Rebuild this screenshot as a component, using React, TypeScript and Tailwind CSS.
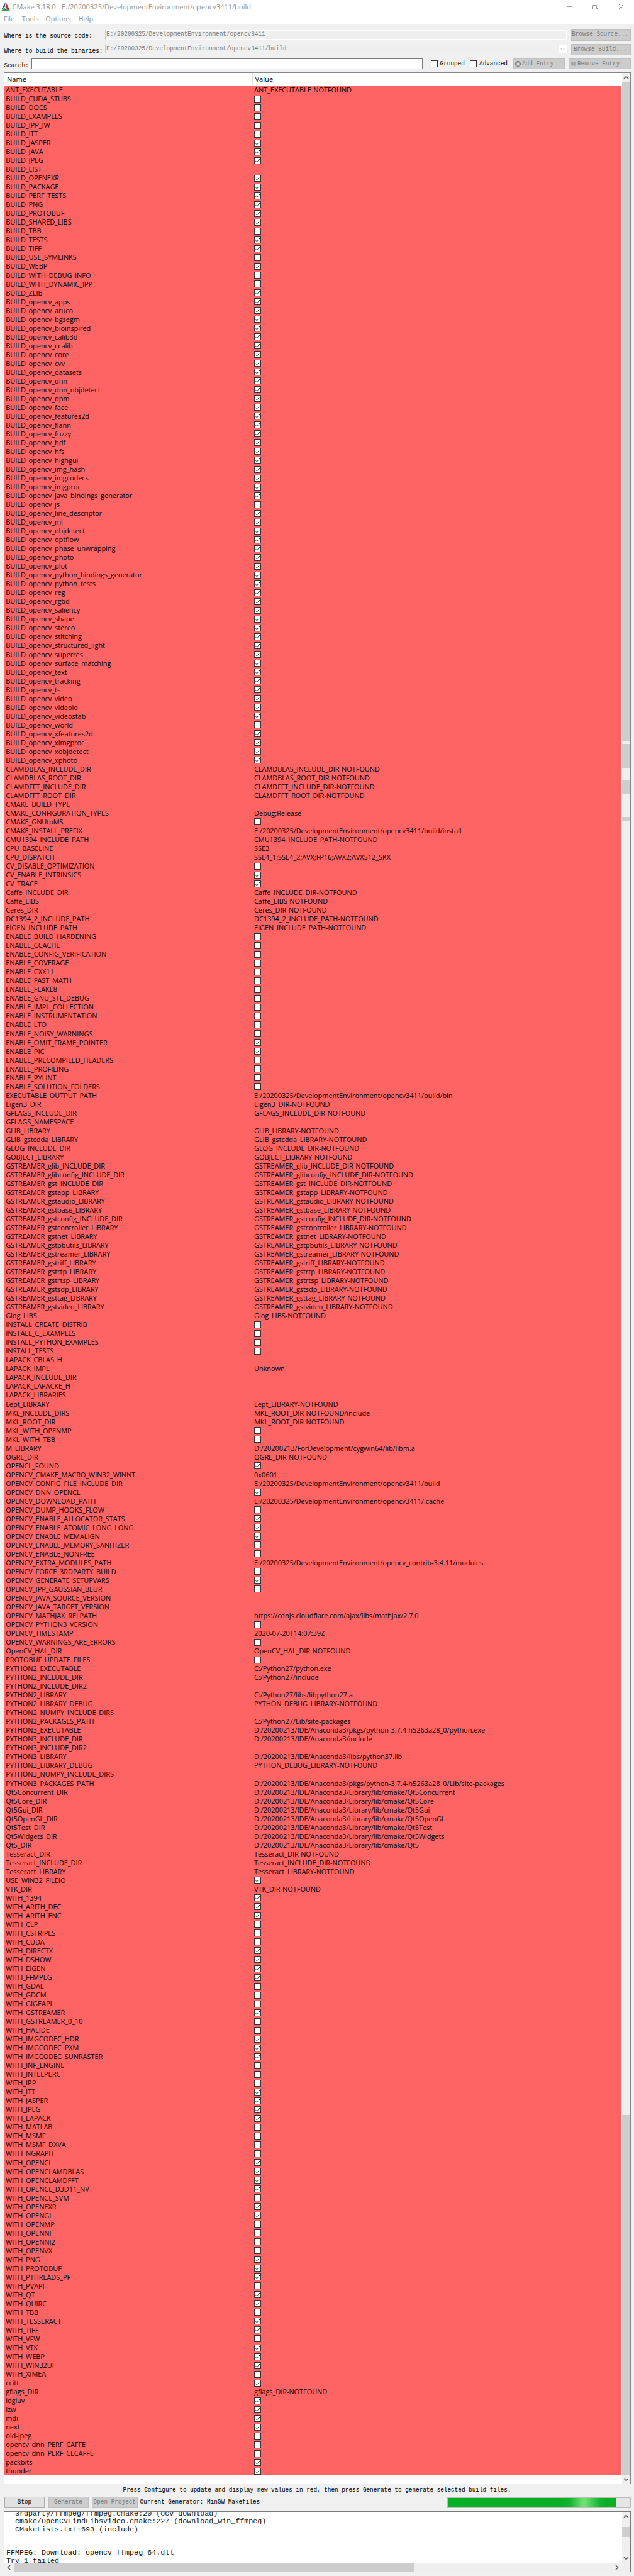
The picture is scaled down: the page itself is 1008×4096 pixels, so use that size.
import React from "react";

type Cell = boolean | string;

const SOURCE = `
ANT_EXECUTABLE=*
BUILD_CUDA_STUBS=off
BUILD_DOCS=off
BUILD_EXAMPLES=off
BUILD_IPP_IW=off
BUILD_ITT=off
BUILD_JASPER=on
BUILD_JAVA=on
BUILD_JPEG=on
BUILD_LIST=
BUILD_OPENEXR=on
BUILD_PACKAGE=on
BUILD_PERF_TESTS=on
BUILD_PNG=on
BUILD_PROTOBUF=on
BUILD_SHARED_LIBS=on
BUILD_TBB=off
BUILD_TESTS=on
BUILD_TIFF=on
BUILD_USE_SYMLINKS=off
BUILD_WEBP=on
BUILD_WITH_DEBUG_INFO=off
BUILD_WITH_DYNAMIC_IPP=off
BUILD_ZLIB=on
BUILD_opencv_apps=on
BUILD_opencv_aruco=on
BUILD_opencv_bgsegm=on
BUILD_opencv_bioinspired=on
BUILD_opencv_calib3d=on
BUILD_opencv_ccalib=on
BUILD_opencv_core=on
BUILD_opencv_cvv=on
BUILD_opencv_datasets=on
BUILD_opencv_dnn=on
BUILD_opencv_dnn_objdetect=on
BUILD_opencv_dpm=on
BUILD_opencv_face=on
BUILD_opencv_features2d=on
BUILD_opencv_flann=on
BUILD_opencv_fuzzy=on
BUILD_opencv_hdf=on
BUILD_opencv_hfs=on
BUILD_opencv_highgui=on
BUILD_opencv_img_hash=on
BUILD_opencv_imgcodecs=on
BUILD_opencv_imgproc=on
BUILD_opencv_java_bindings_generator=on
BUILD_opencv_js=off
BUILD_opencv_line_descriptor=on
BUILD_opencv_ml=on
BUILD_opencv_objdetect=on
BUILD_opencv_optflow=on
BUILD_opencv_phase_unwrapping=on
BUILD_opencv_photo=on
BUILD_opencv_plot=on
BUILD_opencv_python_bindings_generator=on
BUILD_opencv_python_tests=on
BUILD_opencv_reg=on
BUILD_opencv_rgbd=on
BUILD_opencv_saliency=on
BUILD_opencv_shape=on
BUILD_opencv_stereo=on
BUILD_opencv_stitching=on
BUILD_opencv_structured_light=on
BUILD_opencv_superres=on
BUILD_opencv_surface_matching=on
BUILD_opencv_text=on
BUILD_opencv_tracking=on
BUILD_opencv_ts=on
BUILD_opencv_video=on
BUILD_opencv_videoio=on
BUILD_opencv_videostab=on
BUILD_opencv_world=off
BUILD_opencv_xfeatures2d=on
BUILD_opencv_ximgproc=on
BUILD_opencv_xobjdetect=on
BUILD_opencv_xphoto=on
CLAMDBLAS_INCLUDE_DIR=*
CLAMDBLAS_ROOT_DIR=*
CLAMDFFT_INCLUDE_DIR=*
CLAMDFFT_ROOT_DIR=*
CMAKE_BUILD_TYPE=
CMAKE_CONFIGURATION_TYPES=Debug;Release
CMAKE_GNUtoMS=off
CMAKE_INSTALL_PREFIX=E:/20200325/DevelopmentEnvironment/opencv3411/build/install
CMU1394_INCLUDE_PATH=*
CPU_BASELINE=SSE3
CPU_DISPATCH=SSE4_1;SSE4_2;AVX;FP16;AVX2;AVX512_SKX
CV_DISABLE_OPTIMIZATION=off
CV_ENABLE_INTRINSICS=on
CV_TRACE=on
Caffe_INCLUDE_DIR=*
Caffe_LIBS=*
Ceres_DIR=*
DC1394_2_INCLUDE_PATH=*
EIGEN_INCLUDE_PATH=*
ENABLE_BUILD_HARDENING=off
ENABLE_CCACHE=off
ENABLE_CONFIG_VERIFICATION=off
ENABLE_COVERAGE=off
ENABLE_CXX11=off
ENABLE_FAST_MATH=off
ENABLE_FLAKE8=off
ENABLE_GNU_STL_DEBUG=off
ENABLE_IMPL_COLLECTION=off
ENABLE_INSTRUMENTATION=off
ENABLE_LTO=off
ENABLE_NOISY_WARNINGS=off
ENABLE_OMIT_FRAME_POINTER=on
ENABLE_PIC=on
ENABLE_PRECOMPILED_HEADERS=off
ENABLE_PROFILING=off
ENABLE_PYLINT=off
ENABLE_SOLUTION_FOLDERS=off
EXECUTABLE_OUTPUT_PATH=E:/20200325/DevelopmentEnvironment/opencv3411/build/bin
Eigen3_DIR=*
GFLAGS_INCLUDE_DIR=*
GFLAGS_NAMESPACE=
GLIB_LIBRARY=*
GLIB_gstcdda_LIBRARY=*
GLOG_INCLUDE_DIR=*
GOBJECT_LIBRARY=*
GSTREAMER_glib_INCLUDE_DIR=*
GSTREAMER_glibconfig_INCLUDE_DIR=*
GSTREAMER_gst_INCLUDE_DIR=*
GSTREAMER_gstapp_LIBRARY=*
GSTREAMER_gstaudio_LIBRARY=*
GSTREAMER_gstbase_LIBRARY=*
GSTREAMER_gstconfig_INCLUDE_DIR=*
GSTREAMER_gstcontroller_LIBRARY=*
GSTREAMER_gstnet_LIBRARY=*
GSTREAMER_gstpbutils_LIBRARY=*
GSTREAMER_gstreamer_LIBRARY=*
GSTREAMER_gstriff_LIBRARY=*
GSTREAMER_gstrtp_LIBRARY=*
GSTREAMER_gstrtsp_LIBRARY=*
GSTREAMER_gstsdp_LIBRARY=*
GSTREAMER_gsttag_LIBRARY=*
GSTREAMER_gstvideo_LIBRARY=*
Glog_LIBS=*
INSTALL_CREATE_DISTRIB=off
INSTALL_C_EXAMPLES=off
INSTALL_PYTHON_EXAMPLES=off
INSTALL_TESTS=off
LAPACK_CBLAS_H=
LAPACK_IMPL=Unknown
LAPACK_INCLUDE_DIR=
LAPACK_LAPACKE_H=
LAPACK_LIBRARIES=
Lept_LIBRARY=*
MKL_INCLUDE_DIRS=MKL_ROOT_DIR-NOTFOUND/include
MKL_ROOT_DIR=*
MKL_WITH_OPENMP=off
MKL_WITH_TBB=off
M_LIBRARY=D:/20200213/ForDevelopment/cygwin64/lib/libm.a
OGRE_DIR=*
OPENCL_FOUND=on
OPENCV_CMAKE_MACRO_WIN32_WINNT=0x0601
OPENCV_CONFIG_FILE_INCLUDE_DIR=E:/20200325/DevelopmentEnvironment/opencv3411/build
OPENCV_DNN_OPENCL=on
OPENCV_DOWNLOAD_PATH=E:/20200325/DevelopmentEnvironment/opencv3411/.cache
OPENCV_DUMP_HOOKS_FLOW=off
OPENCV_ENABLE_ALLOCATOR_STATS=on
OPENCV_ENABLE_ATOMIC_LONG_LONG=on
OPENCV_ENABLE_MEMALIGN=on
OPENCV_ENABLE_MEMORY_SANITIZER=off
OPENCV_ENABLE_NONFREE=off
OPENCV_EXTRA_MODULES_PATH=E:/20200325/DevelopmentEnvironment/opencv_contrib-3.4.11/modules
OPENCV_FORCE_3RDPARTY_BUILD=off
OPENCV_GENERATE_SETUPVARS=on
OPENCV_IPP_GAUSSIAN_BLUR=off
OPENCV_JAVA_SOURCE_VERSION=
OPENCV_JAVA_TARGET_VERSION=
OPENCV_MATHJAX_RELPATH=https://cdnjs.cloudflare.com/ajax/libs/mathjax/2.7.0
OPENCV_PYTHON3_VERSION=off
OPENCV_TIMESTAMP=2020-07-20T14:07:39Z
OPENCV_WARNINGS_ARE_ERRORS=off
OpenCV_HAL_DIR=*
PROTOBUF_UPDATE_FILES=off
PYTHON2_EXECUTABLE=C:/Python27/python.exe
PYTHON2_INCLUDE_DIR=C:/Python27/include
PYTHON2_INCLUDE_DIR2=
PYTHON2_LIBRARY=C:/Python27/libs/libpython27.a
PYTHON2_LIBRARY_DEBUG=PYTHON_DEBUG_LIBRARY-NOTFOUND
PYTHON2_NUMPY_INCLUDE_DIRS=
PYTHON2_PACKAGES_PATH=C:/Python27/Lib/site-packages
PYTHON3_EXECUTABLE=D:/20200213/IDE/Anaconda3/pkgs/python-3.7.4-h5263a28_0/python.exe
PYTHON3_INCLUDE_DIR=D:/20200213/IDE/Anaconda3/include
PYTHON3_INCLUDE_DIR2=
PYTHON3_LIBRARY=D:/20200213/IDE/Anaconda3/libs/python37.lib
PYTHON3_LIBRARY_DEBUG=PYTHON_DEBUG_LIBRARY-NOTFOUND
PYTHON3_NUMPY_INCLUDE_DIRS=
PYTHON3_PACKAGES_PATH=D:/20200213/IDE/Anaconda3/pkgs/python-3.7.4-h5263a28_0/Lib/site-packages
Qt5Concurrent_DIR=D:/20200213/IDE/Anaconda3/Library/lib/cmake/Qt5Concurrent
Qt5Core_DIR=D:/20200213/IDE/Anaconda3/Library/lib/cmake/Qt5Core
Qt5Gui_DIR=D:/20200213/IDE/Anaconda3/Library/lib/cmake/Qt5Gui
Qt5OpenGL_DIR=D:/20200213/IDE/Anaconda3/Library/lib/cmake/Qt5OpenGL
Qt5Test_DIR=D:/20200213/IDE/Anaconda3/Library/lib/cmake/Qt5Test
Qt5Widgets_DIR=D:/20200213/IDE/Anaconda3/Library/lib/cmake/Qt5Widgets
Qt5_DIR=D:/20200213/IDE/Anaconda3/Library/lib/cmake/Qt5
Tesseract_DIR=*
Tesseract_INCLUDE_DIR=*
Tesseract_LIBRARY=*
USE_WIN32_FILEIO=on
VTK_DIR=*
WITH_1394=on
WITH_ARITH_DEC=on
WITH_ARITH_ENC=on
WITH_CLP=off
WITH_CSTRIPES=off
WITH_CUDA=off
WITH_DIRECTX=on
WITH_DSHOW=on
WITH_EIGEN=on
WITH_FFMPEG=on
WITH_GDAL=off
WITH_GDCM=off
WITH_GIGEAPI=off
WITH_GSTREAMER=on
WITH_GSTREAMER_0_10=off
WITH_HALIDE=off
WITH_IMGCODEC_HDR=on
WITH_IMGCODEC_PXM=on
WITH_IMGCODEC_SUNRASTER=on
WITH_INF_ENGINE=off
WITH_INTELPERC=off
WITH_IPP=off
WITH_ITT=on
WITH_JASPER=on
WITH_JPEG=on
WITH_LAPACK=on
WITH_MATLAB=off
WITH_MSMF=off
WITH_MSMF_DXVA=off
WITH_NGRAPH=off
WITH_OPENCL=on
WITH_OPENCLAMDBLAS=on
WITH_OPENCLAMDFFT=on
WITH_OPENCL_D3D11_NV=on
WITH_OPENCL_SVM=off
WITH_OPENEXR=on
WITH_OPENGL=on
WITH_OPENMP=off
WITH_OPENNI=off
WITH_OPENNI2=off
WITH_OPENVX=off
WITH_PNG=on
WITH_PROTOBUF=on
WITH_PTHREADS_PF=on
WITH_PVAPI=off
WITH_QT=on
WITH_QUIRC=on
WITH_TBB=off
WITH_TESSERACT=on
WITH_TIFF=on
WITH_VFW=off
WITH_VTK=on
WITH_WEBP=on
WITH_WIN32UI=on
WITH_XIMEA=off
ccitt=on
gflags_DIR=*
logluv=on
lzw=on
mdi=on
next=on
old-jpeg=off
opencv_dnn_PERF_CAFFE=off
opencv_dnn_PERF_CLCAFFE=off
packbits=on
thunder=on
`;

/** Parses "KEY=value" lines; "*" stands for the KEY-NOTFOUND default. */
const ENTRIES: { name: string; value: Cell }[] = SOURCE.trim()
  .split("\n")
  .map((line) => {
    const at = line.indexOf("=");
    const name = line.slice(0, at);
    const raw = line.slice(at + 1);
    if (raw === "on") return { name, value: true };
    if (raw === "off") return { name, value: false };
    return { name, value: raw === "*" ? `${name}-NOTFOUND` : raw };
  });

const LOG = [
  "  3rdparty/ffmpeg/ffmpeg.cmake:20 (ocv_download)",
  "  cmake/OpenCVFindLibsVideo.cmake:227 (download_win_ffmpeg)",
  "  CMakeLists.txt:693 (include)",
  "",
  "",
  "FFMPEG: Download: opencv_ffmpeg_64.dll",
  "Try 1 failed",
];

function Mono({ children, className = "" }: { children: React.ReactNode; className?: string }) {
  return (
    <span
      className={`inline-block whitespace-pre font-['Liberation_Mono',monospace] text-[9.35px] leading-[12px] scale-y-[1.16] ${className}`}
    >
      {children}
    </span>
  );
}

function CheckBox({ checked = false }: { checked?: boolean }) {
  return (
    <span className="flex size-[11px] shrink-0 items-center justify-center border border-[#333] bg-white">
      {checked && (
        <svg viewBox="0 0 9 9" className="size-[9px]">
          <path d="M1 4.6 L3.4 7 L8 2" fill="none" stroke="#333" strokeWidth="1" />
        </svg>
      )}
    </span>
  );
}

function Arrow({ dir, className = "" }: { dir: "up" | "down" | "left" | "right"; className?: string }) {
  const d = {
    up: "M1 6 L4.5 2.5 L8 6",
    down: "M1 3 L4.5 6.5 L8 3",
    left: "M6 1 L2.5 4.5 L6 8",
    right: "M3 1 L6.5 4.5 L3 8",
  }[dir];
  return (
    <svg viewBox="0 0 9 9" className={`size-[9px] shrink-0 ${className}`}>
      <path d={d} fill="none" stroke="#555" strokeWidth="1.5" />
    </svg>
  );
}

function CMakeLogo() {
  return (
    <svg viewBox="0 0 20 20" className="h-[14px] w-[14px]">
      <path d="M9.6 0 L0 18 L8.4 11 Z" fill="#2a62a8" />
      <path d="M10 0 L20 20 L12.2 16.8 Z" fill="#c22a35" />
      <path d="M0.2 20 L6.4 13.6 L18.4 20 Z" fill="#2f9c46" />
      <path d="M9.4 4.5 L8.6 12 L12 15.8 Z" fill="#cfd3d8" />
    </svg>
  );
}

function Header() {
  return (
    <header className="h-[38px] bg-white text-[#949494]">
      <div className="flex h-[22px] items-start pl-[2px] pt-[3px]">
        <CMakeLogo />
        <span className="ml-[3.5px] text-[11.1px] leading-[15px] whitespace-pre">
          CMake 3.18.0 - E:/20200325/DevelopmentEnvironment/opencv3411/build
        </span>
        <div className="ml-auto flex items-center gap-[32px] pr-[16.5px] pt-[2.5px]">
          <svg viewBox="0 0 9 9" className="h-[9px] w-[9px]">
            <path d="M0 4.5 H9" stroke="#999" />
          </svg>
          <svg viewBox="0 0 9 9" className="h-[9px] w-[9px]">
            <path d="M0.5 2.5 H6.5 V8.5 H0.5 Z M2.5 2.5 V0.5 H8.5 V7.5 H6.5" fill="none" stroke="#999" />
          </svg>
          <svg viewBox="0 0 9 9" className="h-[9px] w-[9px]">
            <path d="M0 0 L9 9 M9 0 L0 9" stroke="#999" />
          </svg>
        </div>
      </div>
      <nav className="flex h-[16px] items-center pl-[6px] text-[10.9px] leading-[14px]">
        <span className="w-[28.7px]">File</span>
        <span className="w-[37.6px]">Tools</span>
        <span className="w-[52.3px]">Options</span>
        <span>Help</span>
      </nav>
    </header>
  );
}

function Button({ children, className = "", active = false }: { children: React.ReactNode; className?: string; active?: boolean }) {
  return (
    <div
      className={`flex shrink-0 items-center justify-center border ${
        active ? "border-[#adadad] bg-[#e1e1e1] text-black" : "border-[#bfbfbf] bg-[#ccc] text-[#7c7c7c]"
      } ${className}`}
    >
      {children}
    </div>
  );
}

function Form() {
  return (
    <section className="h-[77px] pl-[6.4px] pr-[5.5px] pt-[7.5px]">
      <div className="flex h-[19px] items-center">
        <div className="w-[161px] leading-none">
          <Mono>Where is the source code:</Mono>
        </div>
        <div className="flex h-[17px] w-[735px] items-center border border-[#ccc] bg-[#efefef] pl-px text-[#7c7c7c] shadow-[inset_0_0_0_1px_#fff]">
          <Mono>E:/20200325/DevelopmentEnvironment/opencv3411</Mono>
        </div>
        <Button className="ml-[5.6px] h-[19px] w-[95px] pr-[2px]">
          <Mono>Browse Source...</Mono>
        </Button>
      </div>
      <div className="mt-[5px] flex h-[18px] items-center">
        <div className="w-[161px] leading-none">
          <Mono>Where to build the binaries:</Mono>
        </div>
        <div className="mb-px flex h-[14px] w-[735px] items-center border border-[#ccc] bg-[#efefef] pl-px text-[#7c7c7c]">
          <Mono>E:/20200325/DevelopmentEnvironment/opencv3411/build</Mono>
          <span className="ml-auto flex h-full w-[12px] items-center justify-center bg-white">
            <svg viewBox="0 0 8 5" className="h-[5px] w-[7px]">
              <path d="M0.5 0.5 L4 4.3 L7.5 0.5" fill="none" stroke="#aaa" />
            </svg>
          </span>
        </div>
        <Button className="ml-[5.6px] h-[18px] w-[95px] pr-[2px]">
          <Mono>Browse Build...</Mono>
        </Button>
      </div>
      <div className="mt-[5.5px] flex h-[17px] items-center">
        <div className="w-[43.5px] leading-none">
          <Mono>Search:</Mono>
        </div>
        <div className="h-[17px] w-[622px] border border-[#7a7a7a] bg-white" />
        <div className="ml-[13px] flex w-[62.5px] items-center">
          <CheckBox />
          <Mono className="ml-[4px]">Grouped</Mono>
        </div>
        <div className="flex w-[68.5px] items-center">
          <CheckBox />
          <Mono className="ml-[4px]">Advanced</Mono>
        </div>
        <Button className="h-[17px] w-[82px] justify-start! pl-[2px]">
          <svg viewBox="0 0 9 9" className="mr-[2.5px] size-[9px]">
            <path d="M3 0.5 H6 V3 H8.5 V6 H6 V8.5 H3 V6 H0.5 V3 H3 Z" fill="#ddd" stroke="#777" />
          </svg>
          <Mono>Add Entry</Mono>
        </Button>
        <Button className="ml-[6px] h-[17px] w-[99px] justify-start! pl-[2px]">
          <svg viewBox="0 0 9 9" className="mr-[2.5px] size-[9px]">
            <path d="M1.5 1.5 L7.5 7.5 M7.5 1.5 L1.5 7.5" stroke="#a3a3a3" strokeWidth="3" />
          </svg>
          <Mono>Remove Entry</Mono>
        </Button>
      </div>
    </section>
  );
}

function EntryRow({ name, value }: { name: string; value: Cell }) {
  return (
    <div className="flex h-[14.015625px] items-center even:h-[14.03125px]">
      <span className="w-[397px] pl-[2.2px]">{name}</span>
      {typeof value === "string" ? <span>{value}</span> : <CheckBox checked={value} />}
    </div>
  );
}

function CacheTable() {
  return (
    <section className="mx-[5px] ml-[6px] flex h-[3835px] border border-[#828790] bg-white">
      <div className="w-[981px]">
        <div className="flex h-[20px] items-center text-[11.1px] leading-[14px]">
          <span className="flex h-full w-[394.5px] items-center border-r border-[#e2e2e2] pl-[4px]">Name</span>
          <span className="pl-[4px]">Value</span>
        </div>
        <div className="bg-[#ff6464] text-[10.9px] leading-[14px] whitespace-nowrap text-black">
          {ENTRIES.map((e) => (
            <EntryRow key={e.name} name={e.name} value={e.value} />
          ))}
        </div>
      </div>
      <div className="ml-px flex w-[13px] flex-col items-center bg-[#efefef]">
        <Arrow dir="up" className="my-[3px]" />
        <div className="h-[1048px] w-full bg-[#cdcdcd]" />
        <div className="mt-[4px] h-[38px] w-full bg-[#cdcdcd]" />
        <div className="mt-[20px] h-[22px] w-full bg-[#cdcdcd]" />
        <div className="mt-[36px] h-[6px] w-full bg-[#cdcdcd]" />
        <div className="mt-auto h-[573px] w-full bg-[#cdcdcd]" />
        <Arrow dir="down" className="my-[2px]" />
      </div>
    </section>
  );
}

function Toolbar() {
  return (
    <section className="h-[43px] px-[6px]">
      <div className="flex h-[20px] items-center justify-center">
        <Mono>
          Press Configure to update and display new values in red, then press Generate to generate selected build files.
        </Mono>
      </div>
      <div className="flex h-[18px] items-center">
        <Button active className="ml-px h-[18px] w-[64px]">
          <Mono>Stop</Mono>
        </Button>
        <Button className="ml-[5.5px] h-[18px] w-[64px]">
          <Mono>Generate</Mono>
        </Button>
        <Button className="ml-[5.5px] h-[18px] w-[72.5px]">
          <Mono>Open Project</Mono>
        </Button>
        <Mono className="ml-[4px]">Current Generator: MinGW Makefiles</Mono>
        <div className="ml-auto mr-[-1px] h-[17px] w-[292px] border border-[#bcbcbc] bg-[#e6e6e6]">
          <div className="flex h-full w-[267px] justify-end bg-[#06b025]">
            <div className="mr-[14px] h-full w-[78px] bg-[linear-gradient(90deg,#06b025,#12b530_25%,#6fdf74_50%,#6fdf74_56%,#12b530_85%,#06b025)]" />
          </div>
        </div>
      </div>
    </section>
  );
}

function LogPane() {
  return (
    <section className="ml-[6px] mr-[5px] h-[97px] border border-[#7a7a7a] bg-white">
      <div className="flex h-[82px]">
        <div className="w-[981px] overflow-hidden pl-[3px]">
          <div className="-mt-[3.5px] font-['Liberation_Mono',monospace] text-[11.68px] leading-[12.57px] whitespace-pre text-[#111]">
            {LOG.map((line, i) => (
              <div key={i} className="h-[12.57px]">
                {line}
              </div>
            ))}
          </div>
        </div>
        <div className="ml-px flex w-[13px] flex-col items-center bg-[#efefef]">
          <Arrow dir="up" className="mt-[3px]" />
          <div className="mt-[12px] h-[16px] w-full bg-[#cdcdcd]" />
          <Arrow dir="down" className="mb-[4px] mt-auto" />
        </div>
      </div>
      <div className="flex h-[13px] items-center bg-[#efefef]">
        <Arrow dir="left" className="mx-[3px]" />
        <div className="h-full w-[637px] bg-[#cdcdcd]" />
        <Arrow dir="right" className="ml-auto mr-[17px]" />
      </div>
    </section>
  );
}

export default function App() {
  return (
    <main className="h-[4096px] w-[1008px] overflow-hidden bg-[#f0f0f0] font-['Open_Sans','Noto_Sans',sans-serif] text-black">
      <Header />
      <Form />
      <CacheTable />
      <Toolbar />
      <LogPane />
    </main>
  );
}
